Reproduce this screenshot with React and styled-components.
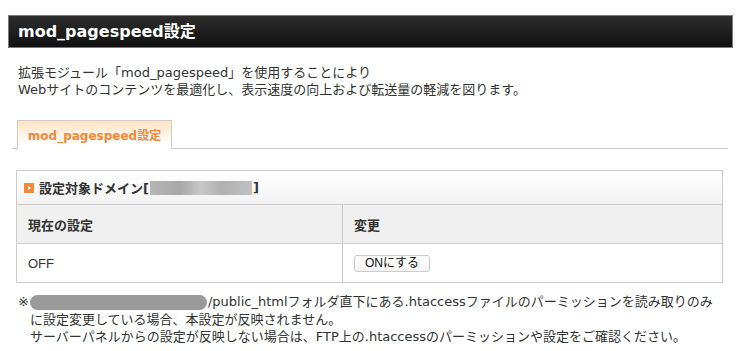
import { styled, createGlobalStyle } from "styled-components";

const GlobalStyle = createGlobalStyle`
  body {
    margin: 0;
    background: #fff;
    font-family: "DejaVu Sans", "Noto Sans CJK JP", sans-serif;
    font-size: 13px;
    color: #333;
  }
`;

const App = () => {
  return (
    <Wrapper>
      <GlobalStyle />
      <TitleBar>mod_pagespeed設定</TitleBar>

      <Intro>
        拡張モジュール「mod_pagespeed」を使用することにより
        <br />
        Webサイトのコンテンツを最適化し、表示速度の向上および転送量の軽減を図ります。
      </Intro>

      <TabBar>
        <Tab>mod_pagespeed設定</Tab>
      </TabBar>

      <Panel>
        <Caption>
          <Marker />
          設定対象ドメイン[<Masked $w={102} $h={14} />]
        </Caption>
        <Row $head>
          <Cell>現在の設定</Cell>
          <Cell>変更</Cell>
        </Row>
        <Row>
          <Cell $latin>OFF</Cell>
          <Cell>
            <Button>ONにする</Button>
          </Cell>
        </Row>
      </Panel>

      <Note>
        <p>
          ※<Masked $w={177} $h={15} $round />/public_htmlフォルダ直下にある.htaccessファイルのパーミッションを読み取りのみ
        </p>
        <p className="indent">に設定変更している場合、本設定が反映されません。</p>
        <p className="indent">
          サーバーパネルからの設定が反映しない場合は、FTP上の.htaccessのパーミッションや設定をご確認ください。
        </p>
      </Note>
    </Wrapper>
  );
};

const Wrapper = styled.div`
  width: 740px;
  padding-top: 15px;
`;

const TitleBar = styled.h1`
  margin: 0 7px 0 8px;
  height: 33px;
  box-sizing: border-box;
  border: 1px solid #7a7a7a;
  background: linear-gradient(#2e2e2e, #1c1c1c 60%, #111);
  color: #fff;
  font-size: 16px;
  font-weight: bold;
  line-height: 31px;
  padding-left: 9px;
`;

const Intro = styled.p`
  margin: 16px 0 0 18px;
  line-height: 17px;
`;

const TabBar = styled.div`
  display: flex;
  margin: 22px 12px 0 12px;
  padding-left: 5px;
  border-bottom: 1px solid #ccc;
`;

const Tab = styled.div`
  width: 155px;
  height: 29px;
  box-sizing: border-box;
  margin-bottom: -1px;
  border: 1px solid #ccc;
  border-bottom: none;
  background: linear-gradient(#fde2c2, #fff 80%);
  color: #f0883a;
  font-size: 12px;
  font-weight: bold;
  text-align: center;
  line-height: 31px;
`;

const Panel = styled.div`
  margin: 21px 17px 0 16px;
  border: 1px solid #ccc;
`;

const Caption = styled.div`
  display: flex;
  align-items: center;
  height: 33px;
  padding-left: 7px;
  background: linear-gradient(#fff, #f2f2f2);
  font-weight: bold;
`;

const Marker = styled.span`
  width: 10px;
  height: 10px;
  margin-right: 5px;
  background: #f08a3c;
  position: relative;
  &::after {
    content: "";
    position: absolute;
    left: 4px;
    top: 3px;
    border-left: 3px solid #fff;
    border-top: 2px solid transparent;
    border-bottom: 2px solid transparent;
  }
`;

const Masked = styled.span`
  display: inline-block;
  width: ${(p) => p.$w}px;
  height: ${(p) => p.$h}px;
  vertical-align: middle;
  margin: 0 1px;
  border-radius: ${(p) => (p.$round ? "8px" : "0")};
  background: ${(p) =>
    p.$round
      ? "#9a9a9a"
      : "linear-gradient(90deg, #b5b5b5, #a8a8a8 30%, #c8c8c8 50%, #b0b0b0 70%, #c0c0c0)"};
`;

const Row = styled.div`
  display: grid;
  grid-template-columns: 325px 1fr;
  height: 38px;
  border-top: 1px solid #ccc;
  background: ${(p) => (p.$head ? "#f0f0f0" : "#fff")};
  font-weight: ${(p) => (p.$head ? "bold" : "normal")};
`;

const Cell = styled.div`
  display: flex;
  align-items: center;
  padding-left: 11px;
  font-family: ${(p) =>
    p.$latin ? '"Liberation Sans", sans-serif' : "inherit"};
  & + & {
    border-left: 1px solid #ccc;
  }
`;

const Button = styled.button`
  width: 76px;
  height: 17px;
  padding: 0;
  border: 1px solid #ccc;
  border-radius: 3px;
  background: linear-gradient(#fff, #f4f4f4);
  font-family: "Liberation Sans", "Noto Sans CJK JP", sans-serif;
  font-size: 12px;
  color: #111;
  line-height: 15px;
`;

const Note = styled.div`
  margin: 10px 0 0 18px;

  p {
    margin: 0;
    line-height: 17.5px;
  }

  .indent {
    padding-left: 12px;
  }
`;

export default App;
